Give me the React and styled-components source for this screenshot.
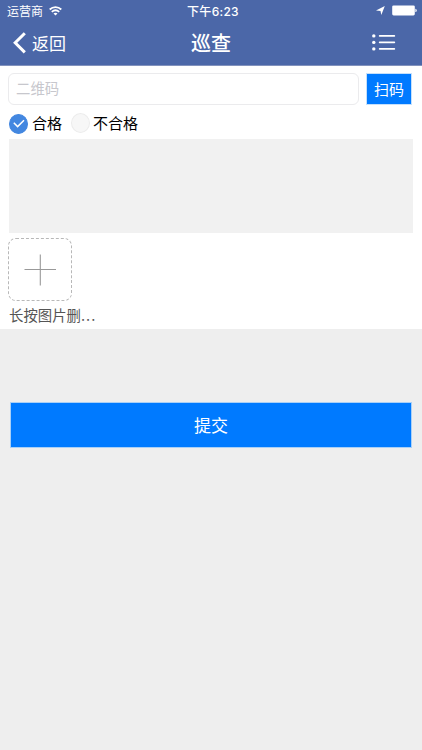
import React, { useState } from 'react';
import styled, { createGlobalStyle } from 'styled-components';

function App() {

  // States
  const [code, setCode] = useState('');
  const [passed, setPassed] = useState(true);
  const [remark, setRemark] = useState('');

  return (
    <Page>
      <GlobalStyle />
      <Header>
        <StatusBar>
          <Carrier>
            运营商
            <WifiIcon />
          </Carrier>
          <Clock>下午6:23</Clock>
          <StatusIcons>
            <LocationIcon />
            <BatteryIcon />
          </StatusIcons>
        </StatusBar>
        <NavBar>
          <BackButton>
            <BackIcon />
            <span>返回</span>
          </BackButton>
          <Title>巡查</Title>
          <MenuButton aria-label="菜单">
            <ListIcon />
          </MenuButton>
        </NavBar>
      </Header>

      <FormPanel>
        <CodeRow>
          <CodeInput
            placeholder="二维码"
            value={code}
            onChange={e => setCode(e.target.value)}
          />
          <ScanButton>扫码</ScanButton>
        </CodeRow>
        <ChoiceRow>
          <Choice onClick={() => setPassed(true)}>
            <Circle $checked={passed}>{passed && <CheckIcon />}</Circle>
            合格
          </Choice>
          <Choice onClick={() => setPassed(false)}>
            <Circle $checked={!passed}>{!passed && <CheckIcon />}</Circle>
            不合格
          </Choice>
        </ChoiceRow>
        <Remark value={remark} onChange={e => setRemark(e.target.value)} />
        <AddPhoto aria-label="添加图片">
          <AddIcon />
        </AddPhoto>
        <Hint>长按图片删<Dots>...</Dots></Hint>
      </FormPanel>

      <SubmitButton>提交</SubmitButton>
    </Page>
  );
}

export default App;

// Icons
const WifiIcon = () => (
  <svg width="13" height="10" viewBox="0 0 13 10" fill="none" stroke="#fff" strokeWidth="1.8">
    <path d="M0.7 3.5 C4 0.3 9 0.3 12.3 3.5" />
    <path d="M2.8 5.9 C5 3.9 8 3.9 10.2 5.9" />
    <path d="M6.5 9.6 L4.5 7.5 C5.6 6.5 7.4 6.5 8.5 7.5 Z" fill="#fff" stroke="none" />
  </svg>
);

const LocationIcon = () => (
  <svg width="9" height="9" viewBox="0 0 9 9">
    <path d="M8.8 0 L5.3 9 L4.5 4.9 L0 4.4 Z" fill="#fff" />
  </svg>
);

const BatteryIcon = () => (
  <svg width="25" height="11" viewBox="0 0 25 11" fill="#fff">
    <rect x="0.2" y="0.4" width="22.6" height="10" rx="1.4" />
    <path d="M23.4 3.7 C25.2 4.2 25.2 6.6 23.4 7.1 Z" />
  </svg>
);

const BackIcon = () => (
  <svg width="13" height="22" viewBox="0 0 13 22" fill="none" stroke="#fff" strokeWidth="3">
    <path d="M11.8 1.2 L2.2 10.8 L11.8 20.4" />
  </svg>
);

const ListIcon = () => (
  <svg width="24" height="17" viewBox="0 0 24 17" fill="#fff">
    <circle cx="1.8" cy="1.9" r="1.7" />
    <circle cx="1.8" cy="8.4" r="1.7" />
    <circle cx="1.8" cy="14.9" r="1.7" />
    <rect x="6.8" y="1.1" width="16.4" height="1.6" rx="0.8" />
    <rect x="6.8" y="7.6" width="16.4" height="1.6" rx="0.8" />
    <rect x="6.8" y="14.1" width="16.4" height="1.6" rx="0.8" />
  </svg>
);

const CheckIcon = () => (
  <svg width="12" height="9" viewBox="0 0 12 9" fill="none" stroke="#fff" strokeWidth="1.5">
    <path d="M0.8 3.8 L4.6 7.6 L11 1.2" />
  </svg>
);

const AddIcon = () => (
  <svg width="32" height="32" viewBox="0 0 32 32" stroke="#999" strokeWidth="1.1">
    <path d="M16.3 0.5 V31.5 M0.5 15.5 H32" />
  </svg>
);

// Styles
const GlobalStyle = createGlobalStyle`
  * {
    box-sizing: border-box;
  }

  body {
    margin: 0;
    background: #eee;
    font-family: Inter, "Noto Sans CJK SC", sans-serif;
  }

  button, input, textarea {
    margin: 0;
    padding: 0;
    border: none;
    outline: none;
    background: none;
    font-family: inherit;
    color: inherit;
  }

  svg {
    display: block;
    flex: none;
  }
`;

const Page = styled.div`
  min-height: 750px;
  background: #eee;
`;

const Header = styled.header`
  height: 66px;
  color: #fff;
  background: #4b67a8;
  border-bottom: 1px solid #8292bd;
`;

const StatusBar = styled.div`
  display: grid;
  grid-template-columns: 1fr auto 1fr;
  align-items: center;
  height: 22px;
  padding: 0 5px 0 7px;
  font-size: 12px;
  line-height: 20px;
`;

const Carrier = styled.div`
  display: flex;
  align-items: center;
  gap: 6px;
  padding-top: 1px;

  svg {
    margin-top: -2px;
  }
`;

const Clock = styled.div`
  padding: 1px 0 0 2px;
  font-weight: 500;
  letter-spacing: 0.3px;
`;

const StatusIcons = styled.div`
  display: flex;
  justify-content: flex-end;
  align-items: center;
  gap: 7px;
  padding-bottom: 1px;
`;

const NavBar = styled.div`
  display: grid;
  grid-template-columns: 1fr auto 1fr;
  align-items: center;
  height: 42px;
  padding: 0 26px 0 13px;
`;

const BackButton = styled.button`
  display: flex;
  align-items: center;
  gap: 6px;
  font-size: 17px;
  line-height: 24px;

  span {
    padding-top: 2px;
  }
`;

const Title = styled.h1`
  margin: 0;
  padding: 1px 0 0 13px;
  font-size: 20px;
  font-weight: 500;
  line-height: 28px;
`;

const MenuButton = styled.button`
  justify-self: end;
  padding-bottom: 2px;
`;

const FormPanel = styled.main`
  height: 263px;
  padding: 7px 9px 0 8px;
  background: #fff;
`;

const CodeRow = styled.div`
  display: flex;
  align-items: flex-start;
  gap: 7px;
`;

const CodeInput = styled.input`
  width: 351px;
  height: 32px;
  padding: 0 7px 2px;
  border: 1px solid #ebebed;
  border-radius: 6px;
  font-size: 14.4px;

  &::placeholder {
    color: #c7c7cd;
  }
`;

const ScanButton = styled.button`
  width: 46px;
  height: 32px;
  padding-bottom: 2px;
  border: 1px solid #c5e0fb;
  background: #007aff;
  color: #fff;
  font-size: 15px;
`;

const ChoiceRow = styled.div`
  display: flex;
  align-items: center;
  gap: 9px;
  height: 34px;
  padding: 3px 0 0 1px;
`;

const Choice = styled.button`
  display: flex;
  align-items: center;
  gap: 4px;
  color: #000;
  font-size: 15px;
  line-height: 24px;

  & + & {
    gap: 3px;
  }
`;

const Circle = styled.span`
  display: flex;
  justify-content: center;
  align-items: center;
  width: 19px;
  height: 20px;
  margin-bottom: ${props => (props.$checked ? '0' : '2px')};
  border: 1px solid ${props => (props.$checked ? '#4387e0' : '#ececec')};
  border-radius: 50%;
  background: ${props => (props.$checked ? '#4387e0' : '#f7f7f7')};
`;

const Remark = styled.textarea`
  display: block;
  width: 404px;
  height: 94px;
  margin-left: 1px;
  background: #f1f1f1;
  resize: none;
`;

const AddPhoto = styled.button`
  display: flex;
  justify-content: center;
  align-items: center;
  width: 64px;
  height: 63px;
  margin-top: 5px;
  border: 1px dashed #b8b8b8;
  border-radius: 8px;
`;

const Hint = styled.div`
  margin: 5px 0 0 1px;
  color: #555;
  font-size: 14.4px;
  line-height: 20px;
  white-space: nowrap;
`;

const Dots = styled.span`
  letter-spacing: 1px;
`;

const SubmitButton = styled.button`
  display: block;
  width: 402px;
  height: 46px;
  margin: 73px auto 0;
  padding-bottom: 2px;
  border: 1px solid #a9d0f7;
  background: #007aff;
  color: #fff;
  font-size: 17px;
`;
